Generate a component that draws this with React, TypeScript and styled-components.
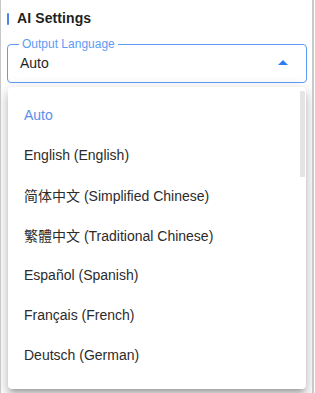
import styled, { createGlobalStyle } from "styled-components";

const languages = [
  "Auto",
  "English (English)",
  "简体中文 (Simplified Chinese)",
  "繁體中文 (Traditional Chinese)",
  "Español (Spanish)",
  "Français (French)",
  "Deutsch (German)",
  "Italiano (Italian)",
];

const selected = "Auto";

export default function App() {
  return (
    <>
      <GlobalStyle />
      <styles.frame>
        <styles.header>
          <styles.accent />
          <styles.title>AI Settings</styles.title>
        </styles.header>

        <styles.field>
          <styles.legend>Output Language</styles.legend>
          <styles.value>Auto</styles.value>
          <styles.arrow viewBox="0 0 10 5" aria-hidden>
            <path d="M0 5 L5 0 L10 5 Z" fill="currentColor" />
          </styles.arrow>
        </styles.field>

        <styles.menu>
          <styles.list role="listbox">
            {languages.map((lang) => (
              <styles.option
                key={lang}
                role="option"
                $selected={lang === selected}
                aria-selected={lang === selected}
              >
                {lang}
              </styles.option>
            ))}
          </styles.list>
          <styles.scrollThumb />
        </styles.menu>
      </styles.frame>
    </>
  );
}

const GlobalStyle = createGlobalStyle`
  html, body {
    margin: 0;
    padding: 0;
    background: #ffffff;
  }
  body {
    font-family: "Liberation Sans", Arial, "Noto Sans CJK SC", "Noto Sans CJK KR", sans-serif;
    color: #222222;
  }
`;

const styles = {
  frame: styled.div`
    position: relative;
    box-sizing: border-box;
    width: 314px;
    height: 393px;
    overflow: hidden;
    border-left: 1px solid #c8c8c8;
    border-right: 2px solid #c8c8c8;
    padding: 12px 5px 0 6px;
    background: #ffffff;
  `,
  header: styled.div`
    display: flex;
    align-items: center;
    gap: 8px;
    height: 13px;
  `,
  accent: styled.span`
    width: 2px;
    height: 12px;
    border-radius: 1px;
    background: #4a86e8;
  `,
  title: styled.h2`
    margin: 0;
    font-size: 14px;
    font-weight: 700;
    line-height: 13px;
    color: #1f1f1f;
    letter-spacing: 0.1px;
  `,
  field: styled.fieldset`
    position: relative;
    box-sizing: border-box;
    margin: 13px 0 0;
    height: 45px;
    padding: 0 12px;
    border: 1px solid #5e9cf3;
    border-radius: 4px;
    display: flex;
    align-items: center;
  `,
  legend: styled.legend`
    margin-left: -1px;
    padding: 0 3px;
    font-size: 12px;
    line-height: 12px;
    color: #5e9cf3;
  `,
  value: styled.span`
    flex: 1;
    margin-top: -7px;
    font-size: 14px;
    color: #1f1f1f;
  `,
  arrow: styled.svg`
    width: 10px;
    height: 5px;
    margin-top: -7px;
    margin-right: 6px;
    color: #2f7cf0;
  `,
  menu: styled.div`
    position: absolute;
    top: 87px;
    left: 7px;
    width: 298px;
    height: 302px;
    background: #ffffff;
    border-radius: 4px;
    overflow: hidden;
    box-shadow: 0px 5px 5px -3px rgba(0, 0, 0, 0.2),
      0px 8px 10px 1px rgba(0, 0, 0, 0.14),
      0px 3px 14px 2px rgba(0, 0, 0, 0.12);
  `,
  list: styled.ul`
    margin: 0;
    padding: 8px 0 0;
    list-style: none;
  `,
  scrollThumb: styled.div`
    position: absolute;
    top: 4px;
    right: 1px;
    width: 5px;
    height: 86px;
    border-radius: 1px;
    background: #e4e4e4;
  `,
  option: styled.li<{ $selected: boolean }>`
    height: 40px;
    display: flex;
    align-items: center;
    padding: 0 16px;
    font-size: 14px;
    color: ${(p) => (p.$selected ? "#5b8def" : "#2b2b2b")};
    white-space: nowrap;
  `,
} as const;
